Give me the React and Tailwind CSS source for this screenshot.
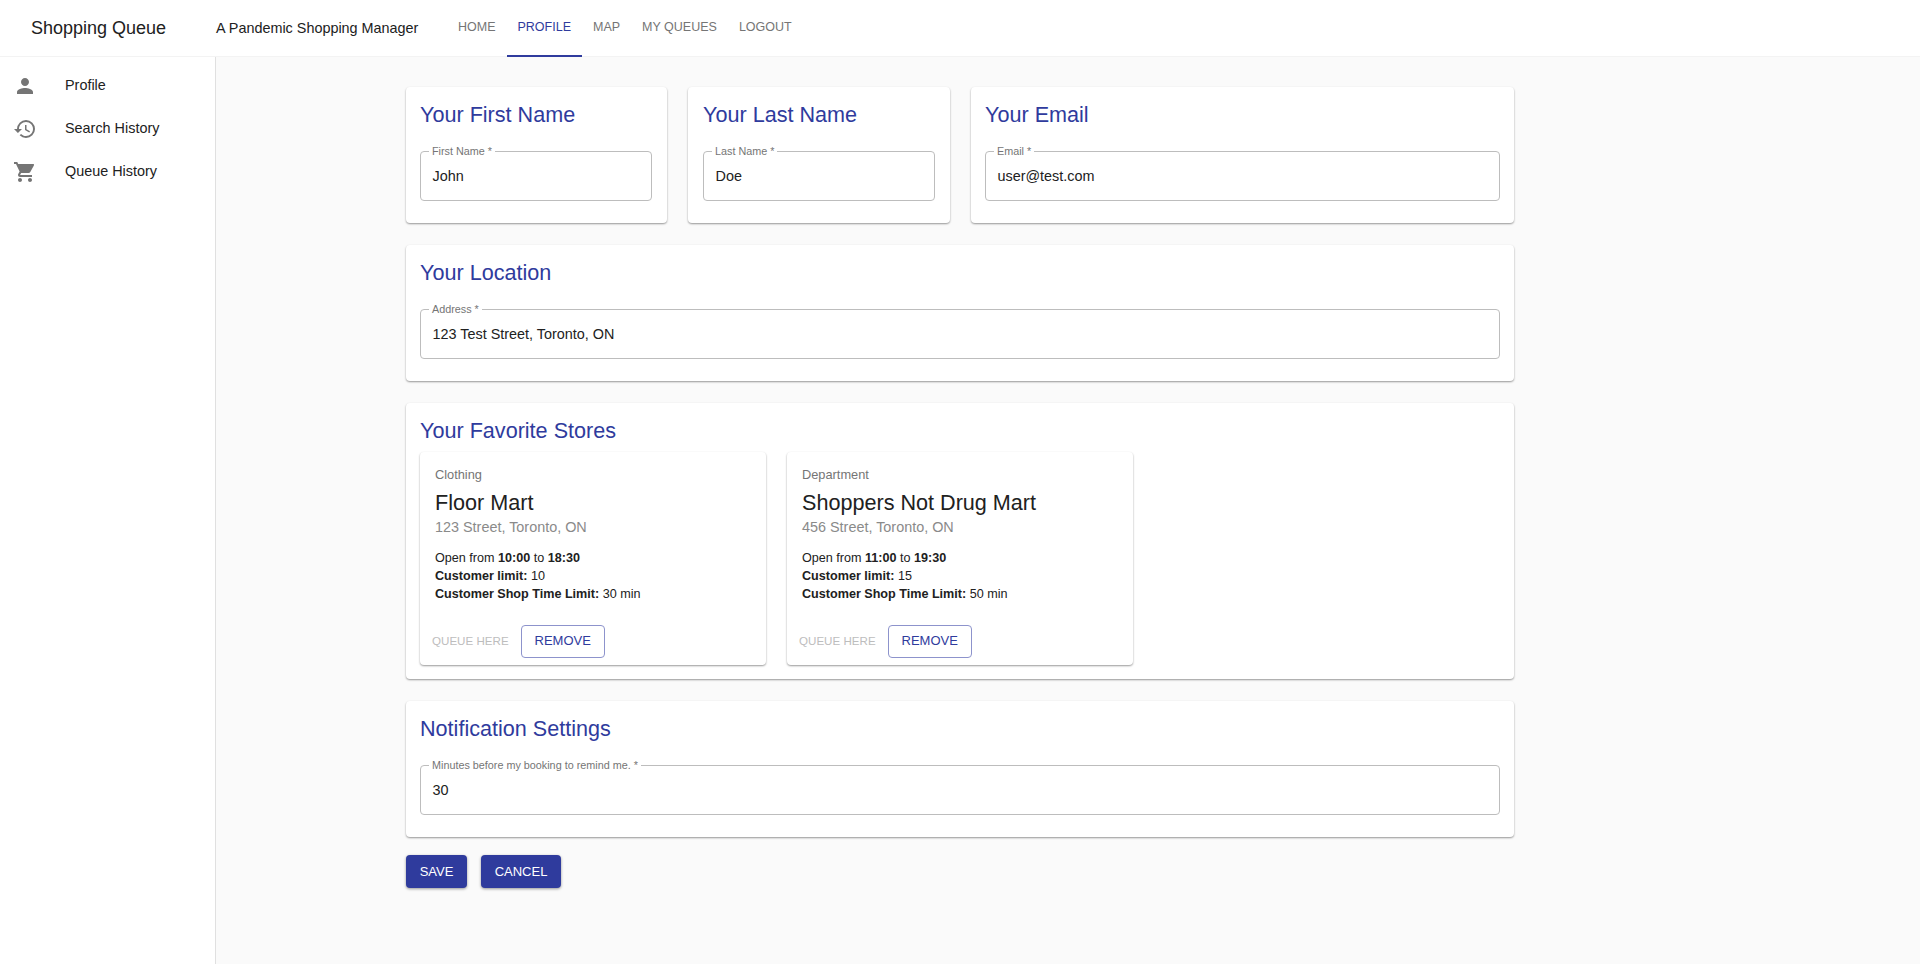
import { MdPerson, MdHistory, MdShoppingCart } from 'react-icons/md';

const TABS = ['HOME', 'PROFILE', 'MAP', 'MY QUEUES', 'LOGOUT'];

const SIDE_ITEMS = [
  { label: 'Profile', Icon: MdPerson },
  { label: 'Search History', Icon: MdHistory },
  { label: 'Queue History', Icon: MdShoppingCart },
];

const STORES = [
  { type: 'Clothing', name: 'Floor Mart', address: '123 Street, Toronto, ON', open: '10:00', close: '18:30', limit: 10, time: 30 },
  { type: 'Department', name: 'Shoppers Not Drug Mart', address: '456 Street, Toronto, ON', open: '11:00', close: '19:30', limit: 15, time: 50 },
];

export default function App() {
  return (
    <div className="h-[964px] overflow-hidden flex flex-col bg-[#fafafa] text-[#212121] font-['Liberation_Sans',sans-serif]">
      <header className="h-[57px] shrink-0 bg-white flex items-center border-b border-[#f3f3f3]">
        <span className="ml-[31px] w-[185px] text-[18px] leading-none">Shopping Queue</span>
        <span className="w-[232px] text-[14.4px] leading-none mt-[1px]">A Pandemic Shopping Manager</span>
        <nav className="flex h-full -ml-[1px]">
          {TABS.map(t => (
            <div key={t}
                 className={`h-[57px] px-[11px] pb-[1px] flex items-center text-[12.5px] border-b-[2px] ${t === 'PROFILE' ? 'text-[#2f3b9d] border-[#2f3b9d]' : 'text-[#757575] border-transparent'}`}>
              {t}
            </div>
          ))}
        </nav>
      </header>

      <div className="flex flex-1 min-h-0">
        <aside className="w-[216px] shrink-0 bg-white border-r border-[#e0e0e0] pt-[7px]">
          {SIDE_ITEMS.map(({ label, Icon }) => (
            <div key={label} className="h-[43px] flex items-center pl-[13px]">
              <Icon size={24} className="text-[#757575] shrink-0" />
              <span className="ml-[28px] text-[14.4px]">{label}</span>
            </div>
          ))}
        </aside>

        <main className="ml-[190px] w-[1108px] pt-[30px] flex flex-col gap-[22px]">
          <div className="flex gap-[21px]">
            <Card title="Your First Name" className="w-[261px] pl-[14px] pr-[15px]"><Field label="First Name" value="John" /></Card>
            <Card title="Your Last Name" className="w-[262px] px-[15px]"><Field label="Last Name" value="Doe" /></Card>
            <Card title="Your Email" className="flex-1 px-[14px]"><Field label="Email" value="user@test.com" /></Card>
          </div>

          <Card title="Your Location" className="px-[14px]"><Field label="Address" value="123 Test Street, Toronto, ON" /></Card>

          <section className="bg-white rounded-[4px] shadow-[0_1px_2px_rgba(0,0,0,0.4)] px-[14px] pt-[13px] h-[276px]">
            <h2 className="text-[21.6px] leading-[30px] text-[#2f3b9d]">Your Favorite Stores</h2>
            <div className="flex gap-[21px] mt-[6px]">
              {STORES.map(s => <StoreCard key={s.name} store={s} />)}
            </div>
          </section>

          <Card title="Notification Settings" className="px-[14px]"><Field label="Minutes before my booking to remind me." value="30" /></Card>

          <div className="flex gap-[14px] -mt-[4px]">
            <button className="h-[33px] w-[61px] rounded-[4px] bg-[#2f3b9d] text-white text-[13px] shadow-[0_1px_3px_rgba(0,0,0,0.4)]">SAVE</button>
            <button className="h-[33px] w-[80px] rounded-[4px] bg-[#2f3b9d] text-white text-[13px] shadow-[0_1px_3px_rgba(0,0,0,0.4)]">CANCEL</button>
          </div>
        </main>
      </div>
    </div>
  );
}

function Card({ title, className = '', children }) {
  return (
    <section className={`bg-white rounded-[4px] shadow-[0_1px_2px_rgba(0,0,0,0.4)] pt-[13px] h-[136px] ${className}`}>
      <h2 className="text-[21.6px] leading-[30px] text-[#2f3b9d]">{title}</h2>
      <div className="mt-[21px]">{children}</div>
    </section>
  );
}

function Field({ label, value }) {
  return (
    <div className="relative h-[50px] rounded-[4px] border border-[#bdbdbd] flex items-center pl-[11.5px] pt-[1px] text-[14.4px]">
      <span className="absolute -top-[7px] left-[8px] bg-white px-[3px] text-[10.8px] leading-[12px] text-[#757575]">{label} *</span>
      {value}
    </div>
  );
}

function StoreCard({ store }) {
  return (
    <div className="w-[346px] h-[213px] bg-white rounded-[4px] shadow-[0_1px_2px_rgba(0,0,0,0.4)] pt-[15px] flex flex-col">
      <div className="px-[15px]">
        <p className="text-[12.8px] leading-[16px] text-[#757575]">{store.type}</p>
        <p className="text-[21.6px] leading-[28px] mt-[6px] text-[#212121]">{store.name}</p>
        <p className="text-[14.4px] leading-[20px] text-[#8a8a8a]">{store.address}</p>
        <div className="text-[12.6px] leading-[18px] mt-[12px] text-[#212121]">
          <p>Open from <b className="font-bold">{store.open}</b> to <b className="font-bold">{store.close}</b></p>
          <p><b className="font-bold">Customer limit:</b> {store.limit}</p>
          <p><b className="font-bold">Customer Shop Time Limit:</b> {store.time} min</p>
        </div>
      </div>
      <div className="mt-auto mb-[7px] ml-[12px] flex items-center gap-[12px]">
        <span className="text-[11.6px] text-[#bdbdbd] pb-[1px]">QUEUE HERE</span>
        <button className="h-[33px] w-[84px] pb-[1px] rounded-[4px] border border-[#8d93cc] text-[#2f3b9d] text-[13px]">REMOVE</button>
      </div>
    </div>
  );
}
